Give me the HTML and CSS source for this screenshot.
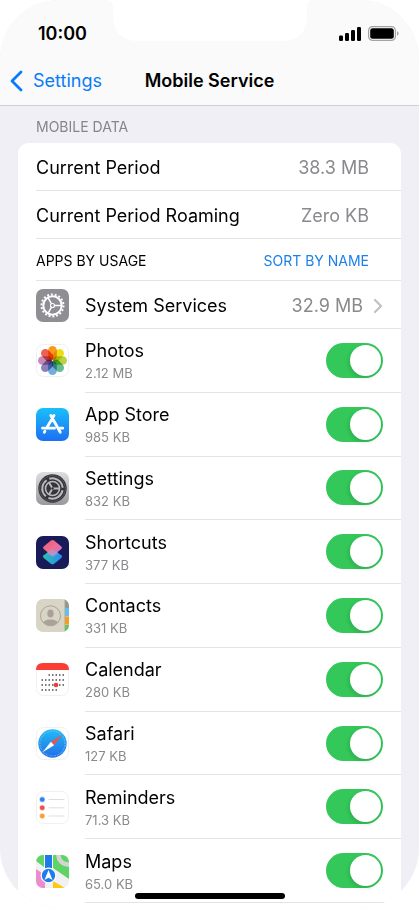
FILE: index.html
```html
<!DOCTYPE html>
<html lang="en">
<head>
<meta charset="utf-8">
<meta name="viewport" content="width=device-width, initial-scale=1">
<title>Mobile Service</title>
<link rel="stylesheet" href="styles.css">
</head>
<body>
<div class="screen">
  <header class="top">
    <svg class="notch" viewBox="0 0 210 42" aria-hidden="true"><path d="M0 0C7 0 8 3 8 10V14C8 32 16 41 35 41H175C194 41 202 32 202 14V10C202 3 203 0 210 0Z" fill="#fff"/></svg>
    <div class="status">
      <time class="clock">10:00</time>
      <div class="indicators">
        <svg width="22" height="14" viewBox="0 0 22 14" aria-hidden="true"><g fill="#000"><rect x="0" y="8.500" width="4" height="5.500" rx="1.200"/><rect x="6" y="6" width="4" height="8" rx="1.200"/><rect x="12" y="3" width="4" height="11" rx="1.200"/><rect x="18" y="0" width="4" height="14" rx="1.200"/></g></svg>
        <svg width="31" height="15" viewBox="0 0 31 15" aria-hidden="true"><rect x=".6" y=".6" width="26.800" height="13.800" rx="4" fill="none" stroke="#a3a3a3" stroke-width="1.200"/><rect x="2.200" y="2.200" width="23.600" height="10.600" rx="2.500" fill="#000"/><path d="M29 5.300q1.600.6 1.600 2.200T29 9.700z" fill="#a3a3a3"/></svg>
      </div>
    </div>
    <nav class="bar">
      <a class="back" href="#settings"><svg width="13" height="22" viewBox="0 0 13 22" aria-hidden="true"><path d="M11 2 2 11l9 9" fill="none" stroke="#087cf8" stroke-width="2.800" stroke-linecap="round" stroke-linejoin="round"/></svg>Settings</a>
      <h1 class="title">Mobile Service</h1>
    </nav>
  </header>
  <main class="content">
    <h2 class="section">MOBILE DATA</h2>
    <div class="card">
      <div class="row"><span>Current Period</span><span class="value">38.3 MB</span></div>
      <div class="row"><span>Current Period Roaming</span><span class="value">Zero KB</span></div>
      <div class="row row-small"><h3 class="caption">APPS BY USAGE</h3><button class="sort" type="button">SORT BY NAME</button></div>
      <a class="app system" href="#system">
        <svg class="icon" viewBox="0 0 33 33" aria-hidden="true"><rect width="33" height="33" rx="7" fill="#8e8e93"/><g fill="none" stroke="#fff"><circle cx="16.500" cy="16.500" r="11" stroke-width="2" stroke-dasharray="1.900 1.940"/><circle cx="16.500" cy="16.500" r="9.200" stroke-width="2"/><circle cx="16.500" cy="16.500" r="2" stroke-width="1.200"/><path d="M18.500 16.500h7M15.500 14.800 12 8.700M15.500 18.200 12 24.300" stroke-width="1.500"/></g></svg>
        <span class="line"><span class="name">System Services</span><span class="value">32.9 MB</span><svg class="chevron" width="10" height="16" viewBox="0 0 10 16" aria-hidden="true"><path d="m2 2 6 6-6 6" fill="none" stroke="#c1c1c4" stroke-width="2.200" stroke-linecap="round" stroke-linejoin="round"/></svg></span>
      </a>
      <ul class="apps">
        <li class="app">
          <svg class="icon" viewBox="0 0 33 33" aria-hidden="true"><rect x=".5" y=".5" width="32" height="32" rx="7" fill="#fff" stroke="#f0f0f0"/><g class="petals"><rect x="12.200" y="2" width="8.600" height="14" rx="4.300" fill="#fa9a1c"/><rect x="12.200" y="2" width="8.600" height="14" rx="4.300" fill="#eddd16" transform="rotate(45 16.500 16.500)"/><rect x="12.200" y="2" width="8.600" height="14" rx="4.300" fill="#b7d33f" transform="rotate(90 16.500 16.500)"/><rect x="12.200" y="2" width="8.600" height="14" rx="4.300" fill="#62bd91" transform="rotate(135 16.500 16.500)"/><rect x="12.200" y="2" width="8.600" height="14" rx="4.300" fill="#73acdf" transform="rotate(180 16.500 16.500)"/><rect x="12.200" y="2" width="8.600" height="14" rx="4.300" fill="#8e82bd" transform="rotate(225 16.500 16.500)"/><rect x="12.200" y="2" width="8.600" height="14" rx="4.300" fill="#c68bb9" transform="rotate(270 16.500 16.500)"/><rect x="12.200" y="2" width="8.600" height="14" rx="4.300" fill="#ed6150" transform="rotate(315 16.500 16.500)"/></g></svg>
          <label class="line" for="photos"><span class="text"><span class="name">Photos</span><span class="size">2.12 MB</span></span><input class="switch" id="photos" type="checkbox" checked></label>
        </li>
        <li class="app">
          <svg class="icon" viewBox="0 0 33 33" aria-hidden="true"><defs><linearGradient id="store" x2="0" y2="1"><stop stop-color="#19c0fb"/><stop offset="1" stop-color="#1d6ff2"/></linearGradient></defs><rect width="33" height="33" rx="7" fill="url(#store)"/><g fill="none" stroke="#fff" stroke-width="2.800" stroke-linecap="round"><path d="M18 7.500 10.800 19.800M14.800 7.500 24.300 24.300M6.500 20.200H18.500M23.500 20.200H26.800M8.900 23.300 8.300 24.300"/></g></svg>
          <label class="line" for="store-switch"><span class="text"><span class="name">App Store</span><span class="size">985 KB</span></span><input class="switch" id="store-switch" type="checkbox" checked></label>
        </li>
        <li class="app">
          <svg class="icon" viewBox="0 0 33 33" aria-hidden="true"><defs><linearGradient id="metal" x2="0" y2="1"><stop stop-color="#dedee1"/><stop offset="1" stop-color="#98989d"/></linearGradient></defs><rect width="33" height="33" rx="7" fill="url(#metal)"/><circle cx="16.500" cy="16.500" r="14.200" fill="#36363a"/><g fill="none" stroke="#b9b9be"><circle cx="16.500" cy="16.500" r="12.800" stroke="#77777c" stroke-width="1" stroke-dasharray=".8 .8"/><circle cx="16.500" cy="16.500" r="10.200" stroke-width="2" stroke-dasharray="18.360 3" transform="rotate(10 16.500 16.500)"/><circle cx="16.500" cy="16.500" r="7" stroke-width="1.600"/><path d="M16.500 16.500h7M16.500 16.500 13 10.500M16.500 16.500 13 22.500" stroke-width="1.900"/></g><circle cx="16.500" cy="16.500" r="1.200" fill="#36363a"/></svg>
          <label class="line" for="settings-switch"><span class="text"><span class="name">Settings</span><span class="size">832 KB</span></span><input class="switch" id="settings-switch" type="checkbox" checked></label>
        </li>
        <li class="app">
          <svg class="icon" viewBox="0 0 33 33" aria-hidden="true"><defs><linearGradient id="pink" x2="1" y2="1"><stop stop-color="#f05576"/><stop offset=".5" stop-color="#ed6f91"/><stop offset="1" stop-color="#b877e8"/></linearGradient><linearGradient id="aqua" x2="1" y2="0"><stop stop-color="#2bbfae"/><stop offset="1" stop-color="#288cf5"/></linearGradient></defs><rect width="33" height="33" rx="7" fill="#191b58"/><path d="m16.500 13 8.800 6.300q1.600 1.300 0 2.600l-7.200 5.800q-1.600 1.100-3.200 0l-7.200-5.800q-1.600-1.300 0-2.600z" fill="url(#aqua)"/><path d="m14.900 4.600-7.200 5.800q-1.600 1.300 0 2.600l7.200 5.900q1.600 1.100 3.200 0l7.200-5.900q1.600-1.300 0-2.600l-7.200-5.800q-1.600-1.100-3.200 0z" fill="url(#pink)"/><path d="m10.500 16.900 6-4 6 4-4.400 3.100q-1.600 1.100-3.200 0z" fill="#b0a2cf" opacity=".55"/></svg>
          <label class="line" for="shortcuts"><span class="text"><span class="name">Shortcuts</span><span class="size">377 KB</span></span><input class="switch" id="shortcuts" type="checkbox" checked></label>
        </li>
        <li class="app">
          <svg class="icon" viewBox="0 0 33 33" aria-hidden="true"><defs><clipPath id="tile"><rect width="33" height="33" rx="7"/></clipPath><clipPath id="face"><circle cx="14.500" cy="16.800" r="9.700"/></clipPath></defs><g clip-path="url(#tile)"><path fill="#d8d5c7" d="M0 0h33v33H0z"/><path fill="#98968e" d="M29 0h4v9h-4z"/><path fill="#62bff2" d="M29 9h4v8h-4z"/><path fill="#f99b1c" d="M29 17.500h4v8h-4z"/><path fill="#5bc966" d="M29 26h4v7h-4z"/><path fill="#aaa89e" d="M28.500 0h.7v33h-.7z"/></g><g clip-path="url(#face)" fill="#aaa299"><ellipse cx="14.500" cy="14.500" rx="3.200" ry="3.900"/><ellipse cx="14.500" cy="25.500" rx="8.500" ry="5"/></g><circle cx="14.500" cy="16.800" r="10" fill="none" stroke="#aaa299"/></svg>
          <label class="line" for="contacts"><span class="text"><span class="name">Contacts</span><span class="size">331 KB</span></span><input class="switch" id="contacts" type="checkbox" checked></label>
        </li>
        <li class="app">
          <svg class="icon" viewBox="0 0 33 33" aria-hidden="true"><rect x=".5" y=".5" width="32" height="32" rx="7" fill="#fff" stroke="#f0f0f0"/><path d="M0 7q0-7 7-7h19q7 0 7 7z" fill="#fb3d33"/><g fill="none" stroke="#4b4b4b" stroke-width="1.500" stroke-dasharray="1.500 2"><path d="M12.500 12H28M5.500 17H28M5.500 22H28M5.500 27H21"/></g><circle cx="20" cy="22" r="2.300" fill="#f33b36"/></svg>
          <label class="line" for="calendar"><span class="text"><span class="name">Calendar</span><span class="size">280 KB</span></span><input class="switch" id="calendar" type="checkbox" checked></label>
        </li>
        <li class="app">
          <svg class="icon" viewBox="0 0 33 33" aria-hidden="true"><defs><linearGradient id="compass" x2="0" y2="1"><stop stop-color="#20bcf5"/><stop offset="1" stop-color="#226ee8"/></linearGradient></defs><rect x=".5" y=".5" width="32" height="32" rx="7" fill="#fff" stroke="#f0f0f0"/><circle cx="16.500" cy="16.500" r="14.200" fill="url(#compass)"/><circle cx="16.500" cy="16.500" r="12.500" fill="none" stroke="#8fd0fa" stroke-width="1.200" stroke-dasharray=".5 1.100"/><path d="m26.500 7.800-11.600 7 3.200 3.400z" fill="#ed5252"/><path d="M6.500 25.200 14.900 14.800l3.200 3.400z" fill="#fff"/></svg>
          <label class="line" for="safari"><span class="text"><span class="name">Safari</span><span class="size">127 KB</span></span><input class="switch" id="safari" type="checkbox" checked></label>
        </li>
        <li class="app">
          <svg class="icon" viewBox="0 0 33 33" aria-hidden="true"><rect x=".5" y=".5" width="32" height="32" rx="7" fill="#fff" stroke="#f0f0f0"/><path d="M12.500 8.500h16M12.500 16.800h16M12.500 25h16" stroke="#dedede"/><g stroke-opacity=".35" stroke-width="1.200"><circle cx="6.200" cy="8.500" r="2.300" fill="#2b83ef" stroke="#2b83ef"/><circle cx="6.200" cy="16.800" r="2.300" fill="#f0504e" stroke="#f0504e"/><circle cx="6.200" cy="25" r="2.300" fill="#f8a12e" stroke="#f8a12e"/></g></svg>
          <label class="line" for="reminders"><span class="text"><span class="name">Reminders</span><span class="size">71.3 KB</span></span><input class="switch" id="reminders" type="checkbox" checked></label>
        </li>
        <li class="app">
          <svg class="icon" viewBox="0 0 33 33" aria-hidden="true"><g clip-path="url(#tile)"><path fill="#f1f1f3" d="M0 0h33v33H0z"/><path d="M0 0h8v12L0 6zM17 0h16v24L17 13z" fill="#5ed366"/><path d="M0 14 9 20v13H0z" fill="#ed8bce"/><path d="m17 26 12 7H17z" fill="#fcc90f"/><circle cx="32" cy="0" r="9.500" fill="none" stroke="#d2d5d2" stroke-width="4.500"/><path d="M8 0h1v16H8zM16 0h1v16h-1z" fill="#fff"/><path fill="#1d7ae8" d="M9 0h7v15H9z"/><circle cx="12.500" cy="20.500" r="7.300" fill="#1b7dee" stroke="#fff" stroke-width="1.200"/><path d="m12.500 15 4 10-4-2.200-4 2.200z" fill="#fff"/></g></svg>
          <label class="line" for="maps"><span class="text"><span class="name">Maps</span><span class="size">65.0 KB</span></span><input class="switch" id="maps" type="checkbox" checked></label>
        </li>
      </ul>
    </div>
  </main>
  <div class="home"></div>
</div>
</body>
</html>
```
FILE: styles.css
```css
* { box-sizing: border-box; }
body { margin: 0; background: #fff; color: #000; font: 18px/24px Inter, "Liberation Sans", sans-serif; }
h1, h2, h3, ul { margin: 0; padding: 0; font: inherit; }
a { color: inherit; text-decoration: none; }
svg { display: block; flex: none; }

.screen { position: relative; display: flex; flex-direction: column; min-height: 100vh; overflow: hidden; border-radius: 60px; background: #f0eff5; }
.top { position: relative; height: 106px; border-bottom: 1px solid #d0d0d5; background: #fafafa; }
.notch { position: absolute; top: 0; left: 50%; width: 210px; transform: translateX(-50%); }
.status { display: flex; align-items: center; justify-content: space-between; height: 57px; padding: 10px 20px 0 38px; }
.clock { font-weight: 600; }
.indicators { display: flex; align-items: center; gap: 7px; }
.bar { display: grid; grid-template-columns: 1fr auto 1fr; align-items: center; height: 48px; padding: 0 10px; }
.back { display: flex; align-items: center; gap: 10px; color: #087cf8; }
.title { font-weight: 600; }

.content { display: flex; flex: 1; flex-direction: column; padding: 0 18px; }
.section { padding: 11px 18px 6px; color: #85858a; font-size: 14px; line-height: 20px; }
.card { display: flex; flex: 1; flex-direction: column; padding-bottom: 5px; border-radius: 11px 11px 0 0; background: #fff; }
.row, .line { display: flex; flex: 1; align-items: center; border-bottom: 1px solid #e4e4e6; }
.row { flex: none; justify-content: space-between; height: 48px; margin-left: 18px; padding: 2px 32px 0 0; }
.row-small { height: 42px; font-size: 14px; }
.value { color: #8a8a8e; }
.sort { padding: 0; border: 0; background: none; color: #1c80e8; font: inherit; }

.apps { display: grid; flex: 1; grid-auto-rows: 1fr; list-style: none; }
.app { display: flex; align-items: center; gap: 16px; padding-left: 18px; }
.icon { width: 33px; height: 33px; }
.petals { isolation: isolate; }
.petals rect { mix-blend-mode: multiply; }
.line { align-self: stretch; padding-right: 18px; }
.system { height: 48px; }
.system .line { padding-top: 2px; }
.name { flex: 1; }
.chevron { margin-left: 10px; }
.text { display: flex; flex: 1; flex-direction: column; padding-top: 2px; }
.text .name { flex: none; }
.size { color: #8a8a8e; font-size: 13px; line-height: 20px; }
.switch { position: relative; width: 57px; height: 35px; margin: 0; border-radius: 18px; background: #34c759; appearance: none; }
.switch::before { content: ""; position: absolute; top: 2px; right: 2px; width: 31px; height: 31px; border-radius: 50%; background: #fff; box-shadow: -1px 2px 4px #0002; }
.switch:not(:checked) { background: #e9e9eb; }
.switch:not(:checked)::before { right: 24px; }

.home { position: absolute; bottom: 9px; left: 50%; width: 150px; height: 6px; border-radius: 3px; background: #000; transform: translateX(-50%); }
```
